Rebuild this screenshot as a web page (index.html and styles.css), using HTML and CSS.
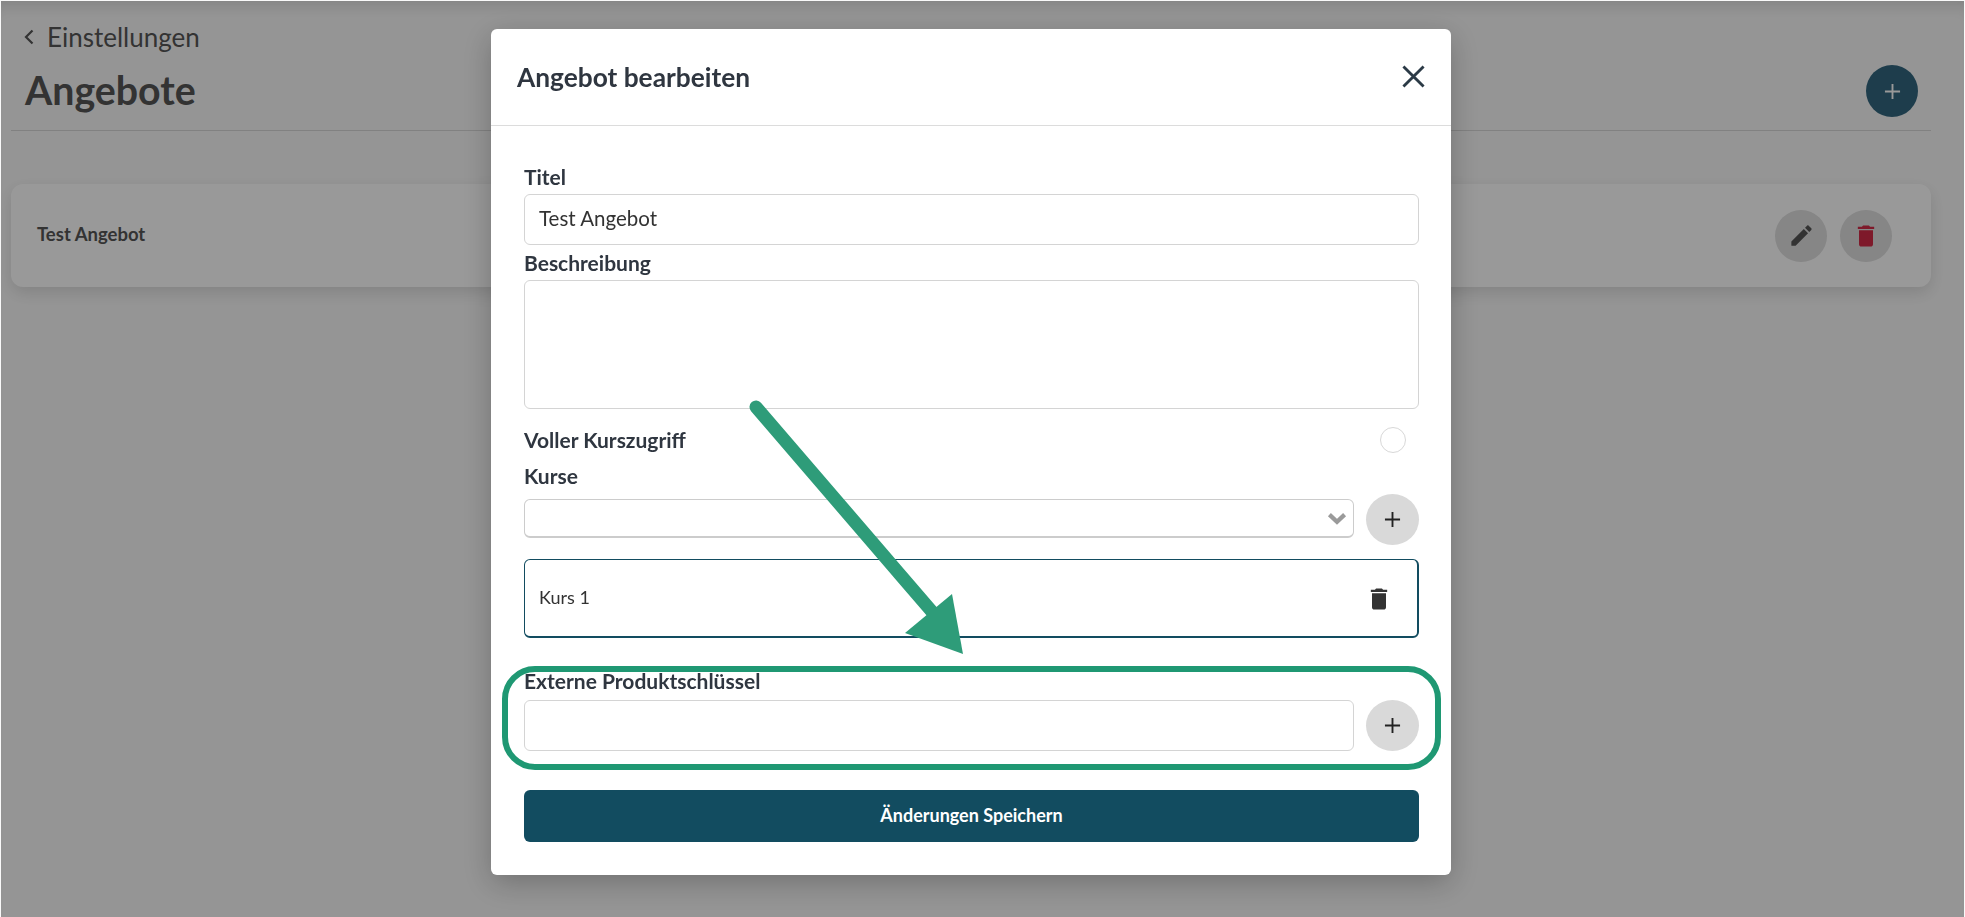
FILE: index.html
```html
<!DOCTYPE html>
<html lang="de">
  <head>
    <meta charset="UTF-8" />
    <title>Angebote</title>
    <link rel="stylesheet" href="styles.css">
  </head>
  <body>
    <!-- Seite hinter dem Dialog -->
    <div class="page">
      <a class="back">
        <svg class="back-icon" viewBox="0 0 10 16"><polyline points="8.5,1.5 2,8 8.5,14.5" /></svg>
        Einstellungen
      </a>
      <div class="page-head">
        <h1>Angebote</h1>
        <button class="round-btn add-btn">
          <svg class="plus" viewBox="0 0 18 18"><path d="M9 1v16M1 9h16" /></svg>
        </button>
      </div>
      <div class="offer-card">
        <span class="offer-name">Test Angebot</span>
        <div class="offer-actions">
          <button class="round-btn action-btn">
            <svg class="edit-icon" viewBox="0 0 24 24"><path d="M3 17.25V21h3.75L17.81 9.94l-3.75-3.75L3 17.25zM20.71 7.04c.39-.39.39-1.02 0-1.41l-2.34-2.34c-.39-.39-1.02-.39-1.41 0l-1.83 1.83 3.75 3.75 1.83-1.83z" /></svg>
          </button>
          <button class="round-btn action-btn">
            <svg class="trash-icon red" viewBox="0 0 24 24"><path d="M6 19c0 1.1.9 2 2 2h8c1.1 0 2-.9 2-2V7H6v12zM19 4h-3.5l-1-1h-5l-1 1H5v2h14V4z" /></svg>
          </button>
        </div>
      </div>
    </div>

    <!-- Dialog -->
    <div class="backdrop">
      <div class="modal">
        <div class="modal-head">
          <h2>Angebot bearbeiten</h2>
          <svg class="close-icon" viewBox="0 0 24 24"><path d="M1.5 1.5l21 21M22.5 1.5l-21 21" /></svg>
        </div>
        <form class="modal-body" autocomplete="off">
          <label class="field-label" for="titel">Titel</label>
          <input class="text-input" type="text" id="titel" value="Test Angebot" />
          <label class="field-label label-desc" for="beschreibung">Beschreibung</label>
          <textarea class="text-area" id="beschreibung"></textarea>

          <div class="toggle-row">
            <span class="field-label">Voller Kurszugriff</span>
            <span class="radio"></span>
          </div>

          <label class="field-label label-kurse" for="kurse">Kurse</label>
          <div class="add-row">
            <div class="select-wrap">
              <select class="select-input" id="kurse"></select>
              <svg class="chevron" viewBox="0 0 18 12"><polyline points="2,2.5 9,9 16,2.5" /></svg>
            </div>
            <button type="button" class="round-btn light-btn">
              <svg class="plus" viewBox="0 0 18 18"><path d="M9 1v16M1 9h16" /></svg>
            </button>
          </div>

          <div class="course-item">
            <span class="course-name">Kurs 1</span>
            <svg class="trash-icon" viewBox="0 0 24 24"><path d="M6 19c0 1.1.9 2 2 2h8c1.1 0 2-.9 2-2V7H6v12zM19 4h-3.5l-1-1h-5l-1 1H5v2h14V4z" /></svg>
          </div>

          <label class="field-label label-ext" for="schluessel">Externe Produktschlüssel</label>
          <div class="add-row">
            <input class="text-input key-input" type="text" id="schluessel" />
            <button type="button" class="round-btn light-btn">
              <svg class="plus" viewBox="0 0 18 18"><path d="M9 1v16M1 9h16" /></svg>
            </button>
          </div>

          <button type="button" class="save-btn">Änderungen Speichern</button>
        </form>
      </div>
    </div>

    <!-- Markierung ueber dem Screenshot -->
    <svg class="annotation" viewBox="0 0 1965 917">
      <rect class="mark-box" x="505" y="669" width="933" height="98" rx="30" />
      <line class="mark-line" x1="756" y1="407" x2="934" y2="614" />
      <polygon class="mark-head" points="952,594 963,654 905,633" />
    </svg>
  </body>
</html>
```

FILE: styles.css
```css
* {
  box-sizing: border-box;
}
html,
body {
  margin: 0;
  height: 917px;
  overflow: hidden;
}
body {
  font-family: Lato, "Open Sans", sans-serif;
  background: #f9f9f9;
  color: #2f3640;
}
button {
  font-family: inherit;
  padding: 0;
  border: none;
  cursor: pointer;
}

/* Seite */
.page {
  padding: 0 34px 0 11px;
}
.back {
  display: flex;
  align-items: center;
  gap: 13px;
  height: 30px;
  margin-top: 22px;
  padding-left: 13px;
  font-size: 26px;
  color: #555;
}
.back-icon {
  width: 10px;
  height: 16px;
  fill: none;
  stroke: #555;
  stroke-width: 2.2;
}
.page-head {
  display: flex;
  justify-content: space-between;
  align-items: flex-start;
  height: 79px;
  padding: 14px 13px 0 14px;
  border-bottom: 1px solid #d8d8d8;
}
.page-head h1 {
  margin: 0;
  font-size: 39.3px;
  font-weight: 700;
  line-height: 48px;
  color: #555;
}
.round-btn {
  display: flex;
  align-items: center;
  justify-content: center;
  width: 52px;
  height: 52px;
  border-radius: 50%;
  flex-shrink: 0;
}
.add-btn {
  background: #33677f;
  color: #fff;
  margin-top: -1px;
}
.add-btn .plus {
  stroke: #fff;
}
.plus {
  width: 17px;
  height: 17px;
  fill: none;
  stroke: #222;
  stroke-width: 2;
}
.offer-card {
  display: flex;
  justify-content: space-between;
  align-items: center;
  height: 103px;
  margin-top: 53px;
  padding: 0 39px 0 26px;
  background: #ffffff;
  border-radius: 12px;
  box-shadow: 0 6px 16px #0000001f;
}
.offer-name {
  font-size: 18.5px;
  font-weight: 700;
  color: #555;
  margin-top: -3px;
}
.offer-actions {
  display: flex;
  gap: 13px;
}
.action-btn {
  background: #dfdfdf;
}
.edit-icon {
  width: 27px;
  height: 27px;
  fill: #555;
}
.trash-icon {
  width: 28px;
  height: 28px;
  fill: #333;
}
.trash-icon.red {
  fill: #d22b46;
}

/* Dialog */
.backdrop {
  position: fixed;
  inset: 1px 1px 0 1px;
  padding: 28px 0 0 490px;
  background: #00000066;
  box-shadow: inset 0 14px 16px -10px #00000026;
}
.modal {
  width: 960px;
  height: 846px;
  background: #fff;
  border-radius: 6px;
  box-shadow: 0 8px 30px #00000040;
}
.modal-head {
  display: flex;
  justify-content: space-between;
  align-items: center;
  height: 97px;
  padding: 0 26px 2px 26px;
  border-bottom: 1px solid #dcdcdc;
}
.modal-head h2 {
  margin: 2px 0 0;
  font-size: 26.3px;
  font-weight: 700;
  color: #2f3640;
}
.close-icon {
  width: 23px;
  height: 23px;
  fill: none;
  stroke: #2b3a46;
  stroke-width: 3;
}
.modal-body {
  display: flex;
  flex-direction: column;
  padding: 41px 32px 0 33px;
}
.field-label {
  font-size: 21px;
  line-height: 20px;
  font-weight: 700;
  color: #2f3640;
  margin-bottom: 7px;
}
.text-input,
.text-area,
.select-input {
  font-family: inherit;
  font-size: 20.5px;
  color: #333;
  background: #fff;
  border: 1px solid #d4d4d4;
  border-radius: 6px;
  outline: none;
}
.text-input {
  width: 100%;
  height: 51px;
  padding: 0 14px 3px;
}
.text-area {
  height: 129px;
  resize: none;
}
.label-desc {
  margin-top: 8px;
}
.toggle-row {
  display: flex;
  justify-content: space-between;
  align-items: center;
  height: 26px;
  margin-top: 18px;
  padding-right: 13px;
}
.toggle-row .field-label {
  margin-bottom: 0;
}
.radio {
  width: 26px;
  height: 26px;
  border: 1px solid #d8d8d8;
  border-radius: 50%;
}
.label-kurse {
  margin-top: 13px;
  margin-bottom: 8px;
}
.add-row {
  display: flex;
  align-items: flex-start;
  gap: 12px;
}
.select-wrap {
  position: relative;
  flex: 1;
  margin-top: 5px;
}
.select-input {
  display: block;
  width: 100%;
  height: 39px;
  appearance: none;
  border-color: #cccccc;
  border-bottom-width: 2px;
}
.chevron {
  position: absolute;
  top: 13px;
  right: 7px;
  width: 20px;
  height: 13px;
  fill: none;
  stroke: #9a9a9a;
  stroke-width: 4;
}
.light-btn {
  width: 53px;
  height: 51px;
  background: #d9d9d9;
}
.course-item {
  display: flex;
  justify-content: space-between;
  align-items: center;
  height: 79px;
  margin-top: 14px;
  padding: 0 24px 0 14px;
  font-size: 18px;
  color: #333;
  border: 1px solid #124c60;
  border-bottom-width: 2px;
  border-right-width: 2px;
  border-radius: 6px;
}
.course-name {
  margin-bottom: 2px;
}
.course-item .trash-icon {
  margin-top: 2px;
}
.label-ext {
  margin-top: 33px;
  margin-bottom: 9px;
}
.key-input {
  flex: 1;
  width: auto;
  min-width: 0;
}
.save-btn {
  height: 52px;
  margin-top: 39px;
  padding-bottom: 3px;
  font-size: 18px;
  font-weight: 700;
  color: #fff;
  background: #124c60;
  border-radius: 6px;
}

/* Markierung */
.annotation {
  position: fixed;
  top: 0;
  left: 0;
  width: 1965px;
  height: 917px;
  pointer-events: none;
}
.mark-box {
  fill: none;
  stroke: #1f9873;
  stroke-width: 6;
}
.mark-line {
  stroke: #2e9c79;
  stroke-width: 13;
  stroke-linecap: round;
}
.mark-head {
  fill: #2e9c79;
}
```
